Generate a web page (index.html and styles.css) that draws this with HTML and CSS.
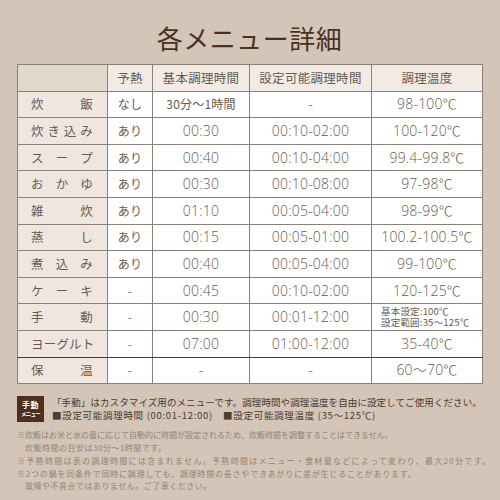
FILE: index.html
```html
<!DOCTYPE html>
<html lang="ja">
<head>
<meta charset="utf-8">
<link rel="stylesheet" href="styles.css">
</head>
<body>
<div class="page">
  <h1 class="title">各メニュー詳細</h1>
  <table class="menu">
    <colgroup>
      <col class="c1"><col class="c2"><col class="c3"><col class="c4"><col class="c5">
    </colgroup>
    <thead>
      <tr>
        <th class="corner"></th>
        <th>予熱</th>
        <th>基本調理時間</th>
        <th>設定可能調理時間</th>
        <th>調理温度</th>
      </tr>
    </thead>
    <tbody>
      <tr><td class="name"><div class="spread"><span>炊</span><span>飯</span></div></td><td class="jp">なし</td><td class="jp">30分～1時間</td><td>-</td><td>98-100℃</td></tr>
      <tr><td class="name"><div class="spread"><span>炊</span><span>き</span><span>込</span><span>み</span></div></td><td class="jp">あり</td><td>00:30</td><td>00:10-02:00</td><td>100-120℃</td></tr>
      <tr><td class="name"><div class="spread"><span>ス</span><span>ー</span><span>プ</span></div></td><td class="jp">あり</td><td>00:40</td><td>00:10-04:00</td><td>99.4-99.8℃</td></tr>
      <tr><td class="name"><div class="spread"><span>お</span><span>か</span><span>ゆ</span></div></td><td class="jp">あり</td><td>00:30</td><td>00:10-08:00</td><td>97-98℃</td></tr>
      <tr><td class="name"><div class="spread"><span>雑</span><span>炊</span></div></td><td class="jp">あり</td><td>01:10</td><td>00:05-04:00</td><td>98-99℃</td></tr>
      <tr><td class="name"><div class="spread"><span>蒸</span><span>し</span></div></td><td class="jp">あり</td><td>00:15</td><td>00:05-01:00</td><td>100.2-100.5℃</td></tr>
      <tr><td class="name"><div class="spread"><span>煮</span><span>込</span><span>み</span></div></td><td class="jp">あり</td><td>00:40</td><td>00:05-04:00</td><td>99-100℃</td></tr>
      <tr><td class="name"><div class="spread"><span>ケ</span><span>ー</span><span>キ</span></div></td><td>-</td><td>00:45</td><td>00:10-02:00</td><td>120-125℃</td></tr>
      <tr><td class="name"><div class="spread"><span>手</span><span>動</span></div></td><td>-</td><td>00:30</td><td>00:01-12:00</td><td class="small"><div>基本設定:100℃</div><div>設定範囲:35～125℃</div></td></tr>
      <tr class="yogurt"><td class="name"><div class="spread"><span>ヨ</span><span>ー</span><span>グ</span><span>ル</span><span>ト</span></div></td><td>-</td><td>07:00</td><td>01:00-12:00</td><td>35-40℃</td></tr>
      <tr><td class="name"><div class="spread"><span>保</span><span>温</span></div></td><td>-</td><td>-</td><td>-</td><td>60～70℃</td></tr>
    </tbody>
  </table>
  <div class="manual">
    <div class="badge"><span class="b1">手動</span><span class="b2">メニュー</span></div>
    <div class="manual-text">
      <p>「手動」はカスタマイズ用のメニューです。調理時間や調理温度を自由に設定してご使用ください。</p>
      <p class="l2">■設定可能調理時間 (00:01-12:00)　■設定可能調理温度 (35～125℃)</p>
    </div>
  </div>
  <div class="notes">
    <p class="n1">※炊飯はお米と水の量に応じて自動的に時間が設定されるため、炊飯時間を調整することはできません。<br><span class="ind">炊飯時間の目安は30分～1時間です。</span></p>
    <p class="n2">※予熱時間は表の調理時間には含まれません。予熱時間はメニュー・食材量などによって変わり、最大20分です。</p>
    <p class="n3">※2つの鍋を同条件で同時に調理しても、調理時間の長さやできあがりに差が生じることがあります。<br><span class="ind">故障や不具合ではありません。ご了承ください。</span></p>
  </div>
</div>
</body>
</html>
```

FILE: styles.css
```css
html, body {
  margin: 0;
  padding: 0;
}
body {
  width: 500px;
  height: 500px;
  background: #d3c5b8;
  font-family: "Noto Sans CJK JP", "Noto Sans", sans-serif;
  color: #5a4a40;
  overflow: hidden;
}
.page {
  padding: 0 18px 0 17px;
}
.title {
  margin: 0;
  height: 64px;
  padding-top: 12px;
  box-sizing: border-box;
  text-align: center;
  font-size: 26px;
  line-height: 52px;
  font-weight: 400;
  color: #4a3223;
  letter-spacing: 0.5px;
}
.menu {
  width: 465px;
  table-layout: fixed;
  border-collapse: collapse;
  border: 1.5px solid #4d3c31;
  font-family: "Open Sans", "Noto Sans CJK JP", sans-serif;
}
.c1 { width: 90px; }
.c2 { width: 45px; }
.c3 { width: 97px; }
.c4 { width: 122px; }
.c5 { width: 111px; }
.menu tr {
  height: 26.6px;
}
.menu th, .menu td {
  border: 1px solid #8d8077;
  padding: 0;
  text-align: center;
  vertical-align: middle;
  font-size: 14px;
  font-weight: 300;
  color: #675a51;
  background: #fff;
  line-height: 16px;
  white-space: nowrap;
  letter-spacing: 0.2px;
}
.menu th {
  background: #f2ebe4;
  font-family: "Noto Sans CJK JP", sans-serif;
  font-size: 12.5px;
  font-weight: 400;
  letter-spacing: 0.3px;
}
.menu th.corner {
  background: #e3d8cc;
}
.menu td.name {
  background: #efe7df;
  padding: 0 14px 0 13px;
  font-family: "Noto Sans CJK JP", sans-serif;
  font-size: 12.5px;
  font-weight: 400;
}
.spread {
  display: flex;
  justify-content: space-between;
}
.menu td.jp {
  font-family: "Noto Sans CJK JP", sans-serif;
  font-size: 12px;
  font-weight: 400;
}
.menu td.small {
  text-align: left;
  padding-left: 9px;
  font-family: "Noto Sans CJK JP", sans-serif;
  font-size: 9.5px;
  font-weight: 400;
  line-height: 11px;
  letter-spacing: 0.2px;
}
.menu tr.yogurt td {
  border-bottom: 1.5px solid #4d3c31;
}
.manual {
  display: flex;
  align-items: center;
  gap: 8px;
  margin-top: 11px;
  height: 27px;
}
.badge {
  width: 27px;
  height: 26px;
  background: #4b2f1f;
  color: #fff;
  display: flex;
  flex-direction: column;
  align-items: center;
  justify-content: center;
  flex: none;
}
.b1 {
  font-size: 8px;
  font-weight: 700;
  line-height: 10px;
  letter-spacing: 0.5px;
}
.b2 {
  font-size: 5.5px;
  line-height: 8px;
  font-weight: 700;
  letter-spacing: -0.8px;
}
.manual-text p {
  margin: 0;
  font-size: 9.5px;
  line-height: 13px;
  color: #4f3a2c;
  white-space: nowrap;
  letter-spacing: 0.1px;
}
.manual-text p.l2 {
  letter-spacing: 0.7px;
}
.notes {
  margin-top: 7px;
  color: #928377;
  font-size: 8px;
  line-height: 12.5px;
}
.notes p {
  margin: 0 0 0.5px 0;
  white-space: nowrap;
}
.n1 { letter-spacing: 0px; }
.n2 { letter-spacing: 1.3px; }
.n3 { letter-spacing: 0.8px; }
.ind {
  padding-left: 8px;
  letter-spacing: 0.5px;
}
```
